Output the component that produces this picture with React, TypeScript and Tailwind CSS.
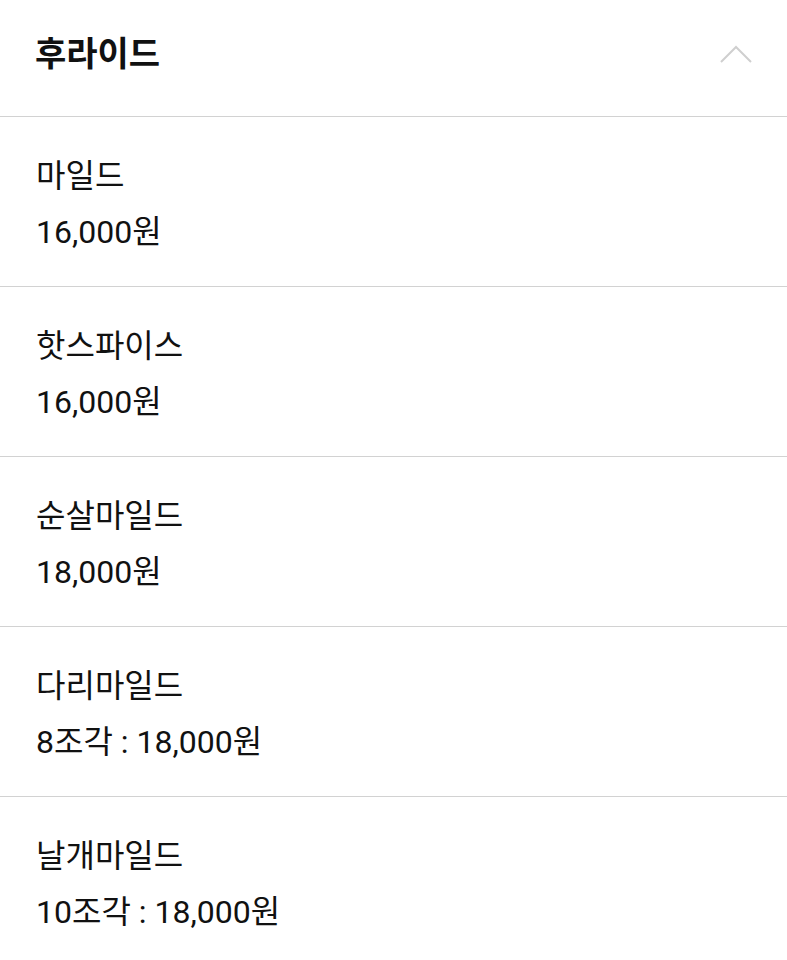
import React from "react";

const items = [
  { name: "마일드", price: "16,000원" },
  { name: "핫스파이스", price: "16,000원" },
  { name: "순살마일드", price: "18,000원" },
  { name: "다리마일드", price: "8조각 : 18,000원" },
  { name: "날개마일드", price: "10조각 : 18,000원" },
];

const App = () => {
  return (
    <div
      className="w-[787px] h-[960px] overflow-hidden bg-white text-[#111]"
      style={{ fontFamily: "Roboto, 'Noto Sans CJK KR', sans-serif" }}
    >
      <div className="flex items-center justify-between h-[116px] pl-[35px] pr-[34px] pb-[8px]">
        <h2 className="text-[34px] font-bold leading-none">후라이드</h2>
        <svg width="34" height="22" viewBox="0 0 34 22" fill="none">
          <path d="M2 19 L17 4 L32 19" stroke="#cfcfcf" strokeWidth="2" />
        </svg>
      </div>
      {items.map((item, index) => (
        <div key={index} className="border-t border-[#d2d2d2] pl-[36px] pt-[31px] pb-[26px]">
          <p className="text-[32px] leading-[56px]">{item.name}</p>
          <p className="text-[32px] leading-[56px]">{item.price}</p>
        </div>
      ))}
    </div>
  );
};

export default App;
